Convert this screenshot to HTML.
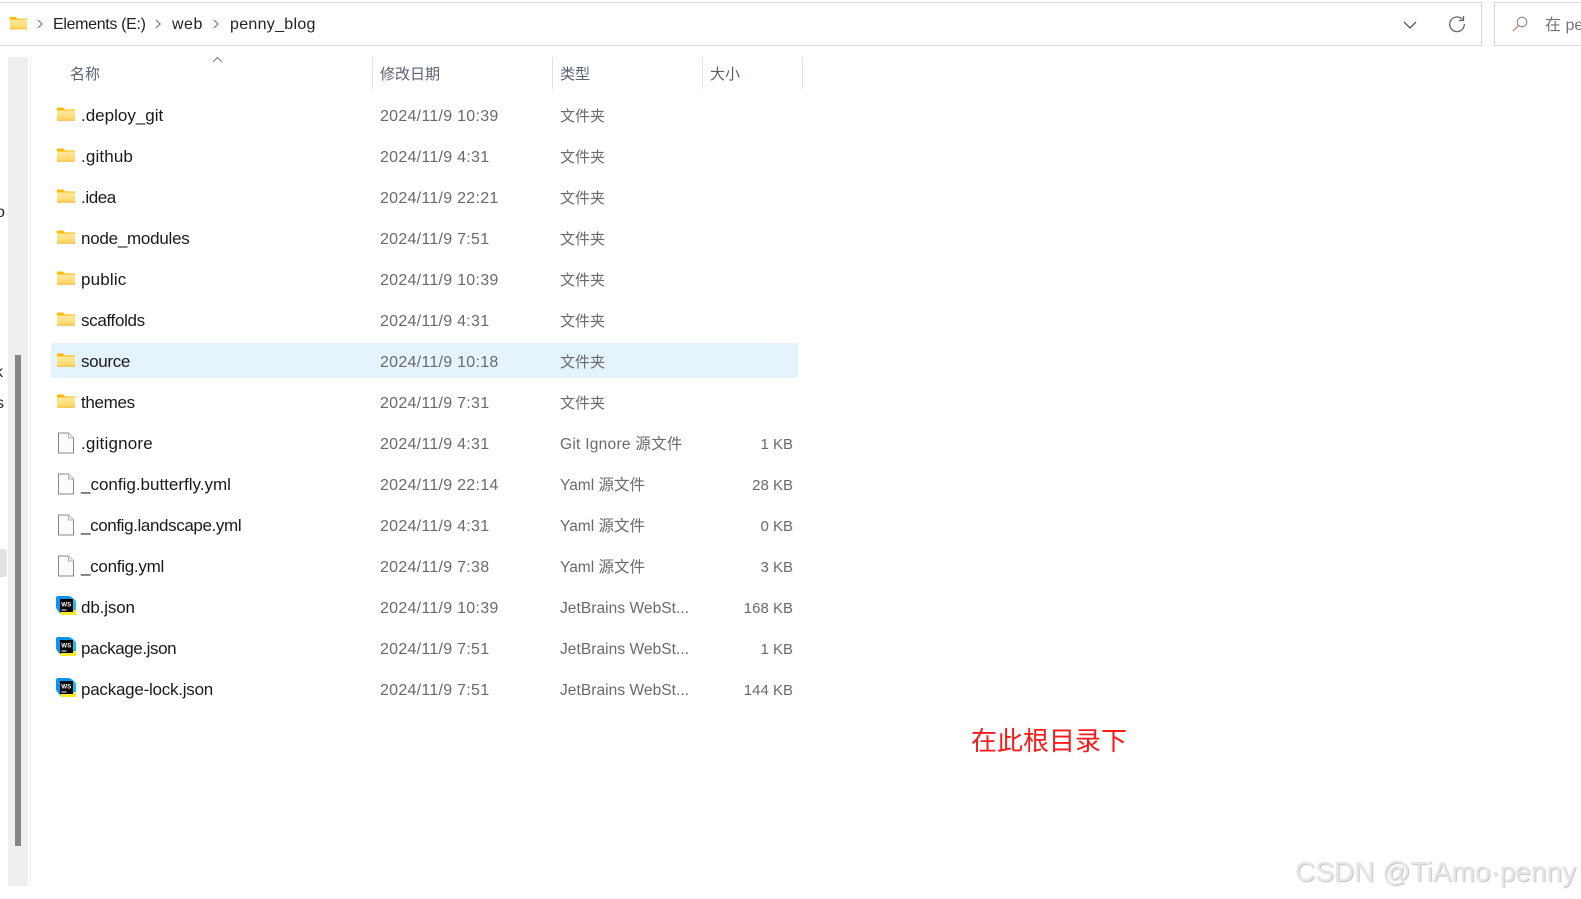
<!DOCTYPE html>
<html lang="zh">
<head>
<meta charset="utf-8">
<title>penny_blog</title>
<style>
html,body{margin:0;padding:0;background:#fff}
body{width:1581px;height:899px;overflow:hidden;position:relative;font-family:"Liberation Sans","Noto Sans CJK SC",sans-serif;font-size:16px;color:#1c1c1c}
.a{position:absolute;white-space:nowrap}
.r{position:absolute;left:0;width:810px;height:35px;line-height:35px}
.r span{position:absolute;white-space:nowrap}
.n{left:81px;font-size:17px;color:#1a1a1a}
.d{left:380px;top:1px;color:#6a6a6a;letter-spacing:.27px}
.t{left:560px;top:1px;color:#6a6a6a;font-size:15.5px}
.f{font-size:15px}
.s{right:17px;top:1px;color:#6a6a6a;font-size:15px}
.r svg{position:absolute;left:56px;top:0}
.h{color:#5a6270;font-size:15px}
.sep{position:absolute;top:57px;width:1px;height:32px;background:#e3e3e3}
.cr{position:absolute;top:0}
</style>
</head>
<body>
<svg width="0" height="0" style="position:absolute">
<defs>
<linearGradient id="fg" x1="0" y1="0" x2="0" y2="1"><stop offset="0" stop-color="#ffe9a0"/><stop offset="1" stop-color="#ffd55e"/></linearGradient>
<symbol id="folder" viewBox="0 0 20 16"><path d="M1 2.500a1 1 0 0 1 1-1h5l2 2h10v11H1z" fill="#fdb900"/><path d="M1 4.500h18v9.500a.6.6 0 0 1-.6.6H1.600a.6.6 0 0 1-.6-.6z" fill="url(#fg)"/><path d="M1 13.800h18v.8H1z" fill="#efb02c"/></symbol>
<symbol id="file" viewBox="0 0 18 22"><path d="M1.500 1h10l5 5v15h-15z" fill="#fbfbfb" stroke="#8a8a8a" stroke-width="1"/><path d="M11.500 1v5h5" fill="#f2f2f2" stroke="#b0b0b0" stroke-width="1"/></symbol>
<symbol id="ws" viewBox="0 0 20 20"><path d="M0 2Q0 0 2 0H12q2 0 4 1.500l3 2.500q1 1 1 2.500V19H7q-2 0-3-1.500L0 12z" fill="#0a93f0"/><path d="M4 17.500L6 14h14v5H7q-2 0-3-1.500z" fill="#f4ea2a"/><path d="M16 1.500l3 2.500q1 1 1 2.500V14l-3-1z" fill="#14c4e8"/><rect x="4" y="3" width="13" height="13" fill="#000"/><rect x="5.500" y="13.500" width="5" height="1" fill="#fff"/><text x="5.300" y="10.300" font-family="Liberation Sans" font-size="6.500" font-weight="700" fill="#fff" textLength="10" lengthAdjust="spacingAndGlyphs">WS</text></symbol>
</defs>
</svg>

<!-- address bar -->
<div class="a" style="left:0;top:2px;width:1481px;height:42px;border:1px solid #d9d9d9;border-left:0"></div>
<div class="a" style="left:1494px;top:2px;width:100px;height:42px;border:1px solid #d9d9d9"></div>
<svg class="a" style="left:9px;top:15px" width="19" height="16"><use href="#folder" width="19" height="16"/></svg>
<svg class="cr" style="left:36px;top:19px" width="8" height="10"><path d="M2 1l4 4-4 4" fill="none" stroke="#777" stroke-width="1.200"/></svg>
<div class="a" style="left:53px;top:13px;line-height:24px;font-size:16px;color:#222;letter-spacing:-.33px">Elements (E:)</div>
<svg class="cr" style="left:154px;top:19px" width="8" height="10"><path d="M2 1l4 4-4 4" fill="none" stroke="#777" stroke-width="1.200"/></svg>
<div class="a" style="left:172px;top:13px;line-height:24px;font-size:16px;color:#222;letter-spacing:.5px">web</div>
<svg class="cr" style="left:212px;top:19px" width="8" height="10"><path d="M2 1l4 4-4 4" fill="none" stroke="#777" stroke-width="1.200"/></svg>
<div class="a" style="left:230px;top:13px;line-height:24px;font-size:16px;color:#222;letter-spacing:.3px">penny_blog</div>
<svg class="a" style="left:1403px;top:20px" width="14" height="10"><path d="M1 2l6 6 6-6" fill="none" stroke="#555" stroke-width="1.300"/></svg>
<svg class="a" style="left:1448px;top:15px" width="18" height="18"><path d="M14.500 4.500A7.300 7.300 0 1 0 16.300 9" fill="none" stroke="#666" stroke-width="1.300"/><path d="M15.500 1v4.500H11" fill="none" stroke="#666" stroke-width="1.300"/></svg>
<svg class="a" style="left:1511px;top:15px" width="18" height="18"><circle cx="11" cy="7" r="4.800" fill="none" stroke="#8a8a8a" stroke-width="1.100"/><path d="M7.500 10.500L2 16" stroke="#c09060" stroke-width="1.300"/></svg>
<div class="a" style="left:1545px;top:13px;line-height:25px;font-size:16px;color:#777">在 pe</div>

<!-- left remnants -->
<div class="a" style="left:-4px;top:201px;line-height:24px;font-size:16px;color:#222">o</div>
<div class="a" style="left:-5px;top:361px;line-height:24px;font-size:16px;color:#222">k</div>
<div class="a" style="left:-4px;top:392px;line-height:24px;font-size:16px;color:#222">s</div>
<div class="a" style="left:0;top:549px;width:7px;height:28px;background:#e2e2e2;border-radius:0 3px 3px 0"></div>

<!-- scroll strip -->
<div class="a" style="left:8px;top:57px;width:20px;height:829px;background:#efefef"></div>
<div class="a" style="left:15px;top:355px;width:6px;height:491px;background:#868686"></div>
<div class="a" style="left:30px;top:57px;width:1px;height:829px;background:#f1f1f1"></div>

<!-- headers -->
<svg class="a" style="left:212px;top:56px" width="11" height="7"><path d="M1 6l4.500-4.500L10 6" fill="none" stroke="#777" stroke-width="1"/></svg>
<div class="a h" style="left:70px;top:63px;line-height:24px">名称</div>
<div class="a h" style="left:380px;top:63px;line-height:24px">修改日期</div>
<div class="a h" style="left:560px;top:63px;line-height:24px">类型</div>
<div class="a h" style="left:710px;top:63px;line-height:24px">大小</div>
<div class="sep" style="left:372px"></div>
<div class="sep" style="left:552px"></div>
<div class="sep" style="left:702px"></div>
<div class="sep" style="left:802px"></div>

<!-- selection -->
<div class="a" style="left:51px;top:343px;width:747px;height:35px;background:#e5f3fd;border-radius:2px"></div>

<!-- rows -->
<div class="r" style="top:98px"><svg style="top:8px" width="20" height="16"><use href="#folder" width="20" height="16"/></svg><span class="n">.deploy_git</span><span class="d">2024/11/9 10:39</span><span class="t f">文件夹</span></div>
<div class="r" style="top:139px"><svg style="top:8px" width="20" height="16"><use href="#folder" width="20" height="16"/></svg><span class="n" style="letter-spacing:.14px">.github</span><span class="d">2024/11/9 4:31</span><span class="t f">文件夹</span></div>
<div class="r" style="top:180px"><svg style="top:8px" width="20" height="16"><use href="#folder" width="20" height="16"/></svg><span class="n" style="letter-spacing:-.4px">.idea</span><span class="d">2024/11/9 22:21</span><span class="t f">文件夹</span></div>
<div class="r" style="top:221px"><svg style="top:8px" width="20" height="16"><use href="#folder" width="20" height="16"/></svg><span class="n" style="letter-spacing:-.25px">node_modules</span><span class="d">2024/11/9 7:51</span><span class="t f">文件夹</span></div>
<div class="r" style="top:262px"><svg style="top:8px" width="20" height="16"><use href="#folder" width="20" height="16"/></svg><span class="n" style="letter-spacing:.17px">public</span><span class="d">2024/11/9 10:39</span><span class="t f">文件夹</span></div>
<div class="r" style="top:303px"><svg style="top:8px" width="20" height="16"><use href="#folder" width="20" height="16"/></svg><span class="n" style="letter-spacing:-.33px">scaffolds</span><span class="d">2024/11/9 4:31</span><span class="t f">文件夹</span></div>
<div class="r" style="top:344px"><svg style="top:8px" width="20" height="16"><use href="#folder" width="20" height="16"/></svg><span class="n" style="letter-spacing:-.33px">source</span><span class="d">2024/11/9 10:18</span><span class="t f">文件夹</span></div>
<div class="r" style="top:385px"><svg style="top:8px" width="20" height="16"><use href="#folder" width="20" height="16"/></svg><span class="n" style="letter-spacing:-.33px">themes</span><span class="d">2024/11/9 7:31</span><span class="t f">文件夹</span></div>
<div class="r" style="top:426px"><svg style="top:6px;left:57px" width="18" height="22"><use href="#file" width="18" height="22"/></svg><span class="n" style="letter-spacing:.2px">.gitignore</span><span class="d">2024/11/9 4:31</span><span class="t" style="letter-spacing:.27px">Git Ignore 源文件</span><span class="s">1 KB</span></div>
<div class="r" style="top:467px"><svg style="top:6px;left:57px" width="18" height="22"><use href="#file" width="18" height="22"/></svg><span class="n">_config.butterfly.yml</span><span class="d">2024/11/9 22:14</span><span class="t">Yaml 源文件</span><span class="s">28 KB</span></div>
<div class="r" style="top:508px"><svg style="top:6px;left:57px" width="18" height="22"><use href="#file" width="18" height="22"/></svg><span class="n" style="letter-spacing:-.38px">_config.landscape.yml</span><span class="d">2024/11/9 4:31</span><span class="t">Yaml 源文件</span><span class="s">0 KB</span></div>
<div class="r" style="top:549px"><svg style="top:6px;left:57px" width="18" height="22"><use href="#file" width="18" height="22"/></svg><span class="n" style="letter-spacing:-.27px">_config.yml</span><span class="d">2024/11/9 7:38</span><span class="t">Yaml 源文件</span><span class="s">3 KB</span></div>
<div class="r" style="top:590px"><svg style="top:6px" width="20" height="20"><use href="#ws" width="20" height="20"/></svg><span class="n" style="letter-spacing:-.14px">db.json</span><span class="d">2024/11/9 10:39</span><span class="t" style="letter-spacing:.06px">JetBrains WebSt...</span><span class="s">168 KB</span></div>
<div class="r" style="top:631px"><svg style="top:6px" width="20" height="20"><use href="#ws" width="20" height="20"/></svg><span class="n" style="letter-spacing:-.42px">package.json</span><span class="d">2024/11/9 7:51</span><span class="t" style="letter-spacing:.06px">JetBrains WebSt...</span><span class="s">1 KB</span></div>
<div class="r" style="top:672px"><svg style="top:6px" width="20" height="20"><use href="#ws" width="20" height="20"/></svg><span class="n" style="letter-spacing:-.24px">package-lock.json</span><span class="d">2024/11/9 7:51</span><span class="t" style="letter-spacing:.06px">JetBrains WebSt...</span><span class="s">144 KB</span></div>

<!-- annotation -->
<div class="a" style="left:971px;top:723px;line-height:36px;font-size:26px;color:#fb1a1a">在此根目录下</div>

<!-- watermark -->
<div class="a" style="left:1295px;top:854px;line-height:36px;font-size:28px;color:#e6e6e6;text-shadow:1px 1px 1px #c4c4c4">CSDN @TiAmo·penny</div>
</body>
</html>
